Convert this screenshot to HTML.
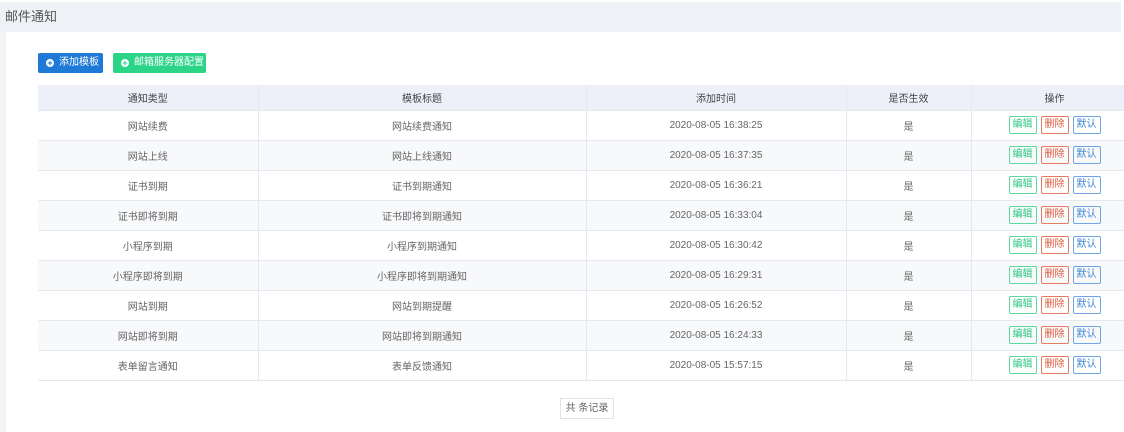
<!DOCTYPE html><html><head><meta charset="utf-8"><style>
body{margin:0;width:1124px;height:432px;overflow:hidden;background:#fff;font-family:"Liberation Sans","Noto Sans CJK SC",sans-serif;color:#555;position:relative}
.hd{position:absolute;left:0;top:2px;width:1121px;height:30px;background:#eef1f6;font-size:13px;line-height:30px;color:#555;padding-left:5px;box-sizing:border-box}
.ls{position:absolute;left:0;top:32px;width:6px;height:400px;background:#f3f4f7}
.btn{position:absolute;top:53px;height:20px;color:#fff;font-size:10px;line-height:20px;border-radius:2px;box-sizing:border-box;padding-left:21px}
.btn:before{content:"";position:absolute;left:8px;top:6px;width:8px;height:8px;border-radius:50%;background:#fff}
.btn:after{content:"+";position:absolute;left:8px;top:0;width:8px;text-align:center;font-weight:bold;font-size:9px}
.b1{left:38px;width:65px;background:#1e7ad6}.b1:after{color:#1e7ad6}
.b2{left:113px;width:93px;background:#2bd487}.b2:after{color:#2bd487}
table{position:absolute;left:38px;top:85px;width:1100px;border-collapse:collapse;font-size:10px;table-layout:fixed;color:#666}
td,th{height:30px;padding:0;text-align:center;vertical-align:middle;border-right:1px solid #e6e8ef;border-bottom:1px solid #e6e8ef;box-sizing:border-box}
th{height:25px;background:#eef0f9;font-weight:normal;color:#444}
tr:nth-child(odd) td{background:#f8f9fb}
.o{display:inline-block;height:18px;line-height:16px;border:1px solid;border-radius:2px;padding:0 3px;margin:0 2px;box-sizing:border-box;font-size:10px;vertical-align:middle}
.e{color:#2bc782;border-color:#5ed89f}.d{color:#e0593c;border-color:#e67b63}.m{color:#3c85d4;border-color:#6ea5e2}
.ft{position:absolute;left:560px;top:398px;width:54px;height:21px;border:1px solid #e3e3e3;font-size:10px;line-height:19px;text-align:center;box-sizing:border-box;color:#666}
</style></head><body>
<div class="hd">邮件通知</div><div class="ls"></div>
<div class="btn b1">添加模板</div><div class="btn b2">邮箱服务器配置</div>
<table><colgroup><col style="width:220px"><col style="width:328px"><col style="width:260px"><col style="width:125px"><col style="width:167px"></colgroup>
<tr><th>通知类型</th><th>模板标题</th><th>添加时间</th><th>是否生效</th><th>操作</th></tr>
<tr><td>网站续费</td><td>网站续费通知</td><td>2020-08-05 16:38:25</td><td>是</td><td><span class="o e">编辑</span><span class="o d">删除</span><span class="o m">默认</span></td></tr>
<tr><td>网站上线</td><td>网站上线通知</td><td>2020-08-05 16:37:35</td><td>是</td><td><span class="o e">编辑</span><span class="o d">删除</span><span class="o m">默认</span></td></tr>
<tr><td>证书到期</td><td>证书到期通知</td><td>2020-08-05 16:36:21</td><td>是</td><td><span class="o e">编辑</span><span class="o d">删除</span><span class="o m">默认</span></td></tr>
<tr><td>证书即将到期</td><td>证书即将到期通知</td><td>2020-08-05 16:33:04</td><td>是</td><td><span class="o e">编辑</span><span class="o d">删除</span><span class="o m">默认</span></td></tr>
<tr><td>小程序到期</td><td>小程序到期通知</td><td>2020-08-05 16:30:42</td><td>是</td><td><span class="o e">编辑</span><span class="o d">删除</span><span class="o m">默认</span></td></tr>
<tr><td>小程序即将到期</td><td>小程序即将到期通知</td><td>2020-08-05 16:29:31</td><td>是</td><td><span class="o e">编辑</span><span class="o d">删除</span><span class="o m">默认</span></td></tr>
<tr><td>网站到期</td><td>网站到期提醒</td><td>2020-08-05 16:26:52</td><td>是</td><td><span class="o e">编辑</span><span class="o d">删除</span><span class="o m">默认</span></td></tr>
<tr><td>网站即将到期</td><td>网站即将到期通知</td><td>2020-08-05 16:24:33</td><td>是</td><td><span class="o e">编辑</span><span class="o d">删除</span><span class="o m">默认</span></td></tr>
<tr><td>表单留言通知</td><td>表单反馈通知</td><td>2020-08-05 15:57:15</td><td>是</td><td><span class="o e">编辑</span><span class="o d">删除</span><span class="o m">默认</span></td></tr>
</table>
<div class="ft">共 条记录</div>
</body></html>
